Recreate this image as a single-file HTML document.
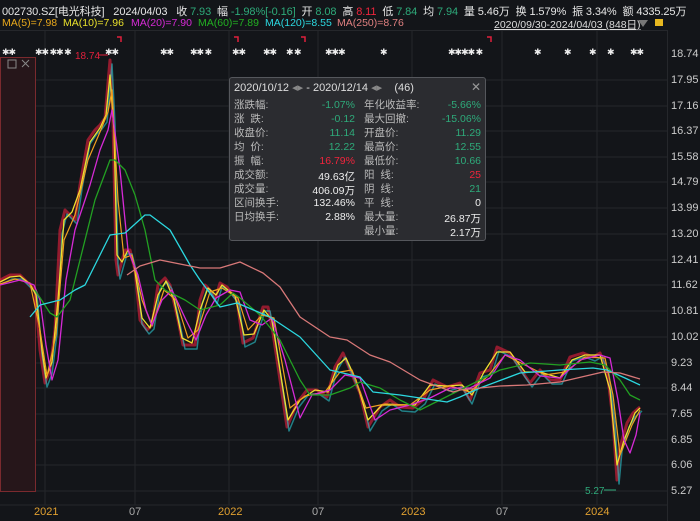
<!DOCTYPE html>
<html><head><meta charset="utf-8"><style>
*{margin:0;padding:0}
body{width:700px;height:521px;background:#131519;overflow:hidden;position:relative;font-family:"Liberation Sans","Noto Sans CJK SC",sans-serif;color:#ddd}
.a{position:absolute;white-space:nowrap}
.t1{top:3px;left:2px;font-size:11px;color:#e6e6e6;letter-spacing:-0.1px}
.g{color:#2eaa7a}.r{color:#f0243c}
.t2{top:17px;font-size:10.5px}
.pop{position:absolute;left:229px;top:77px;width:255px;height:162px;background:#2b2c30;border:1px solid #55575c;border-radius:3px;font-size:10.5px}
.pop .h{position:absolute;left:4px;top:3px;color:#ddd;font-size:11px}
.row{position:absolute;height:13px;line-height:13px}
.lab{color:#bbb}
.v{position:absolute;text-align:right}
.ya{position:absolute;left:671px;font-size:11px;color:#ccc}
.xa{position:absolute;top:506px;font-size:11px}
.st{position:absolute;top:47px;color:#eee;font-size:9px;letter-spacing:-1px}
</style></head><body>
<div class="a t1">002730.SZ[电光科技]&nbsp;&nbsp; 2024/04/03&nbsp;&nbsp; 收 <span class="g">7.93</span>&nbsp; 幅 <span class="g">-1.98%[-0.16]</span>&nbsp; 开 <span class="g">8.08</span>&nbsp; 高 <span class="r">8.11</span>&nbsp; 低 <span class="g">7.84</span>&nbsp; 均 <span class="g">7.94</span>&nbsp; 量 5.46万&nbsp; 换 1.579%&nbsp; 振 3.34%&nbsp; 额 4335.25万</div>
<div class="a t2" style="left:2px;color:#e8a81c">MA(5)=7.98</div>
<div class="a t2" style="left:63px;color:#e8e02c">MA(10)=7.96</div>
<div class="a t2" style="left:131px;color:#d62ad6">MA(20)=7.90</div>
<div class="a t2" style="left:198px;color:#22b022">MA(60)=7.89</div>
<div class="a t2" style="left:265px;color:#2cd8e0">MA(120)=8.55</div>
<div class="a t2" style="left:337px;color:#e08080">MA(250)=8.76</div>
<div class="a t2" style="left:494px;color:#ddd;text-decoration:underline">2020/09/30-2024/04/03 (848日)</div>
<div class="a" style="left:638px;top:20px;width:0;height:0;border-left:5px solid transparent;border-right:5px solid transparent;border-top:7px solid #777"></div>
<div class="a" style="left:655px;top:19px;width:8px;height:7px;background:#e8b820"></div>
<svg class="a" style="left:0;top:0" width="700" height="521">
<g stroke="#25272b" stroke-width="1">
<line x1="0" y1="30.5" x2="667" y2="30.5"/>
<line x1="0" y1="80" x2="667" y2="80"/><line x1="0" y1="106" x2="667" y2="106"/><line x1="0" y1="131" x2="667" y2="131"/><line x1="0" y1="157" x2="667" y2="157"/><line x1="0" y1="182" x2="667" y2="182"/><line x1="0" y1="208" x2="667" y2="208"/><line x1="0" y1="234" x2="667" y2="234"/><line x1="0" y1="260" x2="667" y2="260"/><line x1="0" y1="285" x2="667" y2="285"/><line x1="0" y1="311" x2="667" y2="311"/><line x1="0" y1="337" x2="667" y2="337"/><line x1="0" y1="363" x2="667" y2="363"/><line x1="0" y1="388" x2="667" y2="388"/><line x1="0" y1="414" x2="667" y2="414"/><line x1="0" y1="440" x2="667" y2="440"/><line x1="0" y1="465" x2="667" y2="465"/><line x1="0" y1="491" x2="667" y2="491"/><line x1="0" y1="505" x2="667" y2="505"/>
<line x1="45" y1="30" x2="45" y2="505"/><line x1="135" y1="30" x2="135" y2="505"/><line x1="229" y1="30" x2="229" y2="505"/><line x1="318" y1="30" x2="318" y2="505"/><line x1="412" y1="30" x2="412" y2="505"/><line x1="502" y1="30" x2="502" y2="505"/><line x1="597" y1="30" x2="597" y2="505"/>
<line x1="667.5" y1="30" x2="667.5" y2="521"/>
</g>
<rect x="0.5" y="57.5" width="35" height="434" fill="#26161a" stroke="#7a2a2e"/>
<rect x="8" y="60" width="8" height="8" fill="none" stroke="#888"/>
<path d="M22 60l7 7M29 60l-7 7" stroke="#888"/>
<g stroke="#e0203c" stroke-width="1.5" fill="none"><path d="M117 37h4v5"/><path d="M234 37h4v5"/><path d="M301 37h4v5"/><path d="M487 37h4v5"/></g>
<g fill="none" stroke-linejoin="round">
<polyline stroke="#e8203c" stroke-width="3" opacity=".6" points="0,280 10,275 20,275 30,285 35,290 40,350 45,383 50,370 55,330 60,230 65,210 70,215 75,220 80,185 88,140 95,130 100,125 105,118 110,60 113,120 116,260 118,275 120,268 125,250 130,250 135,270 140,320 147,330 152,325 158,285 165,278 170,285 178,320 183,345 190,345 195,345 200,300 205,285 210,290 215,300 220,283 227,287 237,300 243,343 253,338 263,307 268,307 273,333 287,427 297,403 307,390 317,390 327,397 335,367 343,353 353,377 360,393 368,427 380,407 390,400 400,407 413,408 423,400 433,380 447,387 460,383 470,400 480,373 490,370 497,347 510,353 523,373 530,383 540,370 550,380 560,380 570,357 583,353 593,357 600,353 607,370 613,420 617,480 620,447 627,423 633,413 640,407"/>
<polyline stroke="#2cc8d0" stroke-width="1.5" opacity=".6" transform="translate(2,4)" points="0,280 10,275 20,275 30,285 35,290 40,350 45,383 50,370 55,330 60,230 65,210 70,215 75,220 80,185 88,140 95,130 100,125 105,118 110,60 113,120 116,260 118,275 120,268 125,250 130,250 135,270 140,320 147,330 152,325 158,285 165,278 170,285 178,320 183,345 190,345 195,345 200,300 205,285 210,290 215,300 220,283 227,287 237,300 243,343 253,338 263,307 268,307 273,333 287,427 297,403 307,390 317,390 327,397 335,367 343,353 353,377 360,393 368,427 380,407 390,400 400,407 413,408 423,400 433,380 447,387 460,383 470,400 480,373 490,370 497,347 510,353 523,373 530,383 540,370 550,380 560,380 570,357 583,353 593,357 600,353 607,370 613,420 617,480 620,447 627,423 633,413 640,407"/>
<polyline stroke="#f0e030" stroke-width="1.3" points="0,282 10,277 20,276 30,284 36,295 42,350 46,378 52,362 58,300 64,220 72,212 80,190 90,142 100,128 106,115 110,75 114,130 117,255 122,262 128,250 134,265 142,318 150,328 158,295 166,281 174,300 182,338 192,343 200,310 208,288 216,295 222,285 235,296 244,335 254,334 264,310 272,320 288,420 300,400 315,390 328,392 338,365 346,358 356,380 368,420 382,405 400,405 415,405 430,385 447,386 462,385 472,395 484,372 497,352 510,352 525,372 540,372 560,378 572,360 585,355 600,355 610,390 617,465 624,440 635,413 640,408"/>
<polyline stroke="#f0a020" stroke-width="1.2" points="0,284 15,279 30,283 40,330 47,376 56,335 64,240 75,215 88,160 100,132 108,112 112,90 118,200 124,258 132,255 142,300 152,326 164,290 176,300 188,338 198,330 210,292 222,288 238,298 248,330 262,315 274,318 290,408 305,396 325,392 340,372 352,370 366,408 385,404 410,405 430,390 450,386 470,392 488,376 505,355 525,365 545,375 565,372 585,357 605,358 613,395 620,455 632,425 640,410"/>
<polyline stroke="#d62ad6" stroke-width="1.3" points="0,285 20,280 34,285 40,300 46,345 52,380 58,360 66,280 75,230 90,185 100,150 108,130 112,110 120,170 128,250 138,275 146,310 152,325 162,300 172,290 186,320 196,340 206,315 216,298 230,290 240,292 250,320 262,325 272,318 285,360 300,418 312,395 330,390 345,375 360,378 375,420 390,410 410,405 430,398 450,388 470,388 490,378 505,355 520,360 540,376 560,378 580,360 600,355 610,358 618,400 624,440 630,453 636,435 640,413"/>
<polyline stroke="#22a022" stroke-width="1.3" points="35,290 50,313 57,317 70,300 80,260 95,200 110,160 115,160 125,170 135,195 145,230 155,280 165,290 185,300 200,310 220,305 233,293 240,298 260,315 280,340 300,380 310,395 330,395 350,388 360,382 380,388 400,400 420,410 440,400 460,390 500,370 530,363 560,365 590,362 605,365 620,380 630,395 640,400"/>
<polyline stroke="#2cd8e0" stroke-width="1.3" points="30,317 40,305 60,300 75,290 85,285 100,255 110,235 125,233 145,215 150,215 170,230 190,265 200,280 215,300 220,307 237,303 270,317 300,337 330,370 360,377 373,392 400,395 447,402 460,397 480,388 520,373 560,370 593,368 607,370 625,378 640,385"/>
<polyline stroke="#d87878" stroke-width="1.3" points="127,275 140,266 160,260 200,268 220,268 240,262 263,273 280,287 300,317 330,337 347,340 370,355 390,362 420,380 453,392 460,390 500,386 527,385 560,382 603,372 620,373 640,379"/>
</g>
<text x="75" y="59" font-size="10" fill="#e0203c" font-family="Liberation Sans">18.74</text>
<path d="M98 55h10" stroke="#e0203c"/>
<text x="585" y="494" font-size="10" fill="#2eaa7a" font-family="Liberation Sans">5.27</text>
<path d="M604 490h12" stroke="#2eaa7a"/>
</svg>
<div class="st" style="left:2px">✱✱</div><div class="st" style="left:35px">✱✱ ✱✱ ✱</div><div class="st" style="left:105px">✱✱</div><div class="st" style="left:160px">✱✱</div><div class="st" style="left:190px">✱✱ ✱</div><div class="st" style="left:232px">✱✱</div><div class="st" style="left:263px">✱✱</div><div class="st" style="left:286px">✱ ✱</div><div class="st" style="left:325px">✱✱✱</div><div class="st" style="left:380px">✱</div><div class="st" style="left:448px">✱✱✱✱ ✱</div><div class="st" style="left:534px">✱</div><div class="st" style="left:564px">✱</div><div class="st" style="left:589px">✱</div><div class="st" style="left:607px">✱</div><div class="st" style="left:630px">✱✱</div>
<div class="ya" style="top:48px">18.74</div><div class="ya" style="top:74px">17.95</div><div class="ya" style="top:100px">17.16</div><div class="ya" style="top:125px">16.37</div><div class="ya" style="top:151px">15.58</div><div class="ya" style="top:176px">14.79</div><div class="ya" style="top:202px">13.99</div><div class="ya" style="top:228px">13.20</div><div class="ya" style="top:254px">12.41</div><div class="ya" style="top:279px">11.62</div><div class="ya" style="top:305px">10.81</div><div class="ya" style="top:331px">10.02</div><div class="ya" style="top:357px">9.23</div><div class="ya" style="top:382px">8.44</div><div class="ya" style="top:408px">7.65</div><div class="ya" style="top:434px">6.85</div><div class="ya" style="top:459px">6.06</div><div class="ya" style="top:485px">5.27</div>
<div class="xa" style="left:34px;color:#e0a030">2021</div><div class="xa" style="left:129px;color:#aaa">07</div><div class="xa" style="left:218px;color:#e0a030">2022</div><div class="xa" style="left:312px;color:#aaa">07</div><div class="xa" style="left:401px;color:#e0a030">2023</div><div class="xa" style="left:496px;color:#aaa">07</div><div class="xa" style="left:585px;color:#e0a030">2024</div>
<div class="pop">
<div class="h">2020/10/12 <span style="color:#888">◂▸</span> - 2020/12/14 <span style="color:#888">◂▸</span>&nbsp;&nbsp;&nbsp; (46)</div>
<div class="a" style="right:4px;top:2px;color:#999;font-size:12px">✕</div>
<div class="row lab" style="left:4px;top:21px">涨跌幅:</div><div class="v g" style="right:130px;top:21px">-1.07%</div>
<div class="row lab" style="left:4px;top:35px">涨&nbsp; 跌:</div><div class="v g" style="right:130px;top:35px">-0.12</div>
<div class="row lab" style="left:4px;top:49px">收盘价:</div><div class="v g" style="right:130px;top:49px">11.14</div>
<div class="row lab" style="left:4px;top:63px">均&nbsp; 价:</div><div class="v g" style="right:130px;top:63px">12.22</div>
<div class="row lab" style="left:4px;top:77px">振&nbsp; 幅:</div><div class="v r" style="right:130px;top:77px">16.79%</div>
<div class="row lab" style="left:4px;top:91px">成交额:</div><div class="v" style="right:130px;top:91px;color:#eee">49.63亿</div>
<div class="row lab" style="left:4px;top:105px">成交量:</div><div class="v" style="right:130px;top:105px;color:#eee">406.09万</div>
<div class="row lab" style="left:4px;top:119px">区间换手:</div><div class="v" style="right:130px;top:119px;color:#eee">132.46%</div>
<div class="row lab" style="left:4px;top:133px">日均换手:</div><div class="v" style="right:130px;top:133px;color:#eee">2.88%</div>
<div class="row lab" style="left:134px;top:21px">年化收益率:</div><div class="v g" style="right:4px;top:21px">-5.66%</div>
<div class="row lab" style="left:134px;top:35px">最大回撤:</div><div class="v g" style="right:4px;top:35px">-15.06%</div>
<div class="row lab" style="left:134px;top:49px">开盘价:</div><div class="v g" style="right:4px;top:49px">11.29</div>
<div class="row lab" style="left:134px;top:63px">最高价:</div><div class="v g" style="right:4px;top:63px">12.55</div>
<div class="row lab" style="left:134px;top:77px">最低价:</div><div class="v g" style="right:4px;top:77px">10.66</div>
<div class="row lab" style="left:134px;top:91px">阳&nbsp; 线:</div><div class="v r" style="right:4px;top:91px">25</div>
<div class="row lab" style="left:134px;top:105px">阴&nbsp; 线:</div><div class="v g" style="right:4px;top:105px">21</div>
<div class="row lab" style="left:134px;top:119px">平&nbsp; 线:</div><div class="v" style="right:4px;top:119px;color:#eee">0</div>
<div class="row lab" style="left:134px;top:133px">最大量:</div><div class="v" style="right:4px;top:133px;color:#eee">26.87万</div>
<div class="row lab" style="left:134px;top:147px">最小量:</div><div class="v" style="right:4px;top:147px;color:#eee">2.17万</div>
</div>
</body></html>
